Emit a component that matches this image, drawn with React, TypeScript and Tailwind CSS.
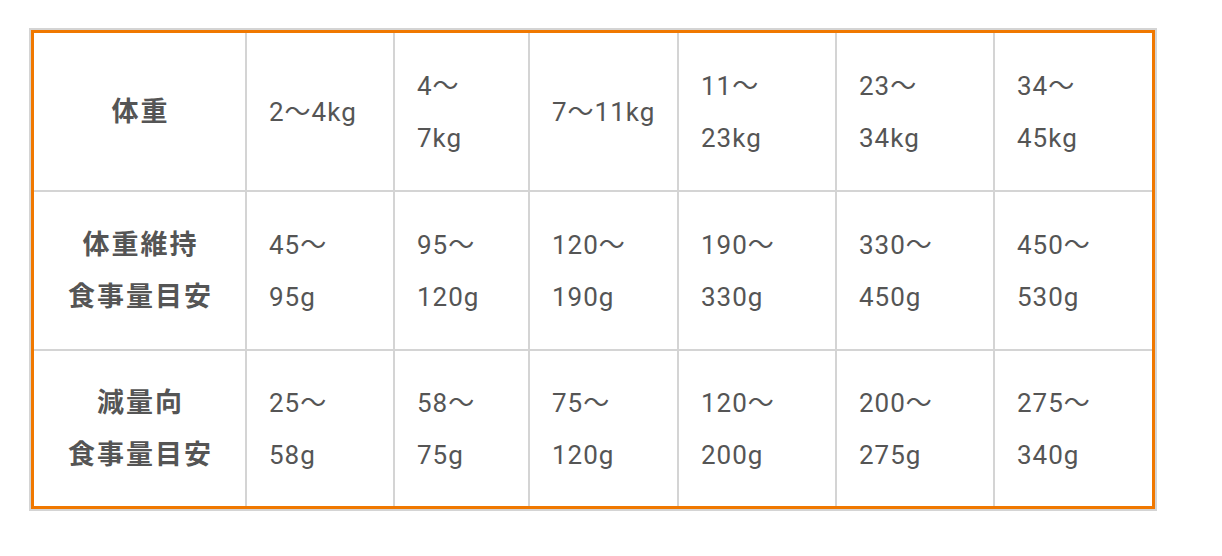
const FONT = "font-['Roboto','Noto_Sans_CJK_JP',sans-serif]";

type Row = { head: string[]; cells: string[][] };

const rows: Row[] = [
  {
    head: ['体重'],
    cells: [['2〜4kg'], ['4〜', '7kg'], ['7〜11kg'], ['11〜', '23kg'], ['23〜', '34kg'], ['34〜', '45kg']],
  },
  {
    head: ['体重維持', '食事量目安'],
    cells: [['45〜', '95g'], ['95〜', '120g'], ['120〜', '190g'], ['190〜', '330g'], ['330〜', '450g'], ['450〜', '530g']],
  },
  {
    head: ['減量向', '食事量目安'],
    cells: [['25〜', '58g'], ['58〜', '75g'], ['75〜', '120g'], ['120〜', '200g'], ['200〜', '275g'], ['275〜', '340g']],
  },
];

export default function App() {
  return (
    <div className={`min-h-screen bg-white pl-[29px] pt-[28px] ${FONT}`}>
      <div className="w-[1128px] border-2 border-[#d4d4d4]">
        <div className="border-[3px] border-[#f07800]">
          <div className="grid grid-cols-[213px_148px_135px_149px_158px_158px_157px] grid-rows-[159px_159px_155px]">
            {rows.map((row, r) => {
              const lastRow = r === rows.length - 1;
              return [
                <div
                  key={`h${r}`}
                  className={`flex flex-col items-center justify-center border-r-2 border-[#d4d4d4] pl-[2px] text-[27px] leading-[52px] font-bold tracking-[2px] text-[#555] ${lastRow ? '' : 'border-b-2'}`}
                >
                  {row.head.map((t) => (
                    <span key={t} className="whitespace-nowrap">{t}</span>
                  ))}
                </div>,
                ...row.cells.map((lines, c) => {
                  const lastCol = c === row.cells.length - 1;
                  return (
                    <div
                      key={`c${r}-${c}`}
                      className={`flex flex-col justify-center pl-[22px] border-[#d4d4d4] text-[26px] leading-[52px] tracking-[1px] text-[#555] ${lastCol ? '' : 'border-r-2'} ${lastRow ? '' : 'border-b-2'}`}
                    >
                      {lines.map((t) => (
                        <span key={t} className="whitespace-nowrap">{t}</span>
                      ))}
                    </div>
                  );
                }),
              ];
            })}
          </div>
        </div>
      </div>
    </div>
  );
}
